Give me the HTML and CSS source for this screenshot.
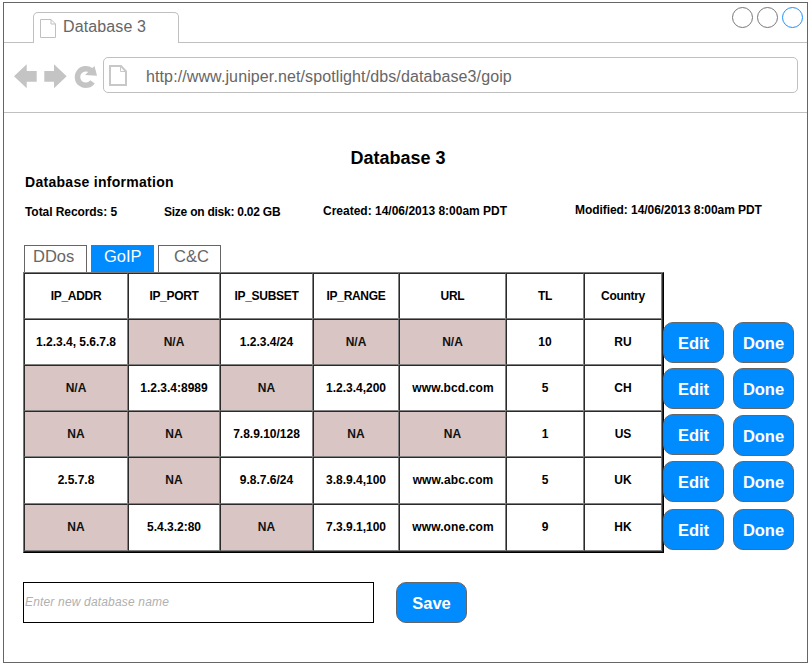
FILE: index.html
```html
<!DOCTYPE html>
<html lang="en">
<head>
<meta charset="utf-8">
<title>Database 3</title>
<link rel="stylesheet" href="styles.css">
</head>
<body>
<div class="window">
  <header class="titlebar">
    <div class="browser-tab">
      <svg class="tab-icon" width="16" height="19" viewBox="0 0 16 19"><path d="M.5.5h10.500l4.500 4.500v13.500H.5zM11 .5v4.500h4.500" /></svg>
      <span>Database 3</span>
    </div>
    <div class="titlebar-rest">
      <i class="dot"></i><i class="dot"></i><i class="dot active"></i>
    </div>
  </header>
  <nav class="toolbar">
    <svg class="nav-icons" width="84" height="26" viewBox="0 0 84 26">
      <path d="M0 12.300L12.700.3V7h10v10.700h-10v6.600z" />
      <path d="M52.700 12.300L40 .3V7H30.300v10.700H40v6.600z" />
      <path class="reload" d="M78.500 17.800A8.300 8.300 0 1 1 77 6.500" />
      <path d="M80.500 2l2.500 9.700-12-.7z" />
    </svg>
    <div class="address">
      <svg class="page-icon" width="18" height="21" viewBox="0 0 18 21"><path d="M1 1h11l5 5.500V20H1z" /><path class="fold" d="M11.500 1.500v5H17" /></svg>
      <span>http://www.juniper.net/spotlight/dbs/database3/goip</span>
    </div>
  </nav>
  <main>
    <h1>Database 3</h1>
    <h2>Database information</h2>
    <div class="info">
      <span class="total">Total Records: 5</span>
      <span class="size">Size on disk: 0.02 GB</span>
      <span class="created">Created: 14/06/2013 8:00am PDT</span>
      <span class="modified">Modified: 14/06/2013 8:00am PDT</span>
    </div>
    <div class="tabs">
      <div class="tab">DDos</div>
      <div class="tab selected">GoIP</div>
      <div class="tab last">C&amp;C</div>
    </div>
    <div class="records">
      <div class="grid">
        <div class="head">IP_ADDR</div><div class="head">IP_PORT</div><div class="head">IP_SUBSET</div><div class="head">IP_RANGE</div><div class="head">URL</div><div class="head">TL</div><div class="head">Country</div>
        <div>1.2.3.4, 5.6.7.8</div><div class="na">N/A</div><div>1.2.3.4/24</div><div class="na">N/A</div><div class="na">N/A</div><div>10</div><div>RU</div>
        <div class="na">N/A</div><div>1.2.3.4:8989</div><div class="na">NA</div><div>1.2.3.4,200</div><div class="url">www.bcd.com</div><div>5</div><div>CH</div>
        <div class="na">NA</div><div class="na">NA</div><div>7.8.9.10/128</div><div class="na">NA</div><div class="na">NA</div><div>1</div><div>US</div>
        <div>2.5.7.8</div><div class="na">NA</div><div>9.8.7.6/24</div><div>3.8.9.4,100</div><div class="url">www.abc.com</div><div>5</div><div>UK</div>
        <div class="na">NA</div><div>5.4.3.2:80</div><div class="na">NA</div><div>7.3.9.1,100</div><div class="url">www.one.com</div><div>9</div><div>HK</div>
      </div>
      <div class="actions edits">
        <button>Edit</button><button>Edit</button><button>Edit</button><button>Edit</button><button>Edit</button>
      </div>
      <div class="actions dones">
        <button>Done</button><button>Done</button><button>Done</button><button>Done</button><button>Done</button>
      </div>
    </div>
    <form class="save-row">
      <input type="text" placeholder="Enter new database name">
      <button type="button" class="save">Save</button>
    </form>
  </main>
</div>
</body>
</html>
```
FILE: styles.css
```css
* { box-sizing: border-box; }
body {
  margin: 0;
  padding: 2px 1px 0 3px;
  background: #fff;
  font-family: "Liberation Sans", Arial, sans-serif;
  overflow: hidden;
}
.window { height: 661px; border: 1px solid #666; }

.titlebar { display: flex; height: 40px; }
.titlebar::before { content: ""; width: 29px; border-bottom: 1px solid #c0c0c0; }
.browser-tab {
  display: flex;
  width: 146px;
  height: 31px;
  margin-top: 9px;
  padding: 6px 0 0 6px;
  border: 1px solid #c0c0c0;
  border-bottom: 0;
  border-radius: 5px 5px 0 0;
  color: #666;
  font-size: 16px;
  line-height: 18px;
}
.browser-tab span { margin: -1px 0 0 7px; letter-spacing: 0.13px; }
.tab-icon { fill: none; stroke: #c0c0c0; }
.titlebar-rest {
  flex: 1;
  display: flex;
  justify-content: flex-end;
  gap: 4px;
  padding: 4px 4px 0 0;
  border-bottom: 1px solid #c0c0c0;
}
.dot { width: 21px; height: 21px; border: 1px solid #777; border-radius: 50%; }
.dot.active { border-color: #1e90ff; }

.toolbar {
  display: flex;
  height: 70px;
  padding: 14px 9px 0 10px;
  border-bottom: 1px solid #c0c0c0;
}
.nav-icons { margin-top: 7px; fill: #c4c4c4; }
.nav-icons .reload { fill: none; stroke: #c4c4c4; stroke-width: 5.5; }
.address {
  display: flex;
  flex: 1;
  align-items: center;
  height: 36px;
  margin-left: 5px;
  padding: 0 5px;
  border: 1px solid #c0c0c0;
  border-radius: 5px;
  color: #666;
  font-size: 16px;
}
.page-icon { fill: none; stroke: #c8c8c8; stroke-width: 2; }
.page-icon .fold { stroke-width: 1; }
.address span { margin-left: 19px; line-height: 18px; padding-top: 3px; letter-spacing: 0.11px; }

main { padding: 34px 0 0 19px; }
h1, h2 { margin: 0; color: #000; }
h1 { width: 750px; font-size: 18px; line-height: 22px; text-align: center; }
h2 { margin: 5px 0 0 2px; font-size: 14px; line-height: 16px; letter-spacing: 0.29px; }
.info {
  display: grid;
  grid-template-columns: 139px 159px 252px auto;
  height: 55px;
  padding: 14px 0 0 2px;
  font-size: 12px;
  font-weight: bold;
  line-height: 14px;
  white-space: nowrap;
}
.info .total { letter-spacing: -0.07px; padding-top: 1px; }
.info .size { letter-spacing: -0.24px; padding-top: 1px; }
.info .modified { margin-top: -1px; letter-spacing: -0.06px; }

.tabs { display: flex; gap: 4px; height: 27px; padding-left: 1px; }
.tab {
  width: 63px;
  border: 1px solid #666;
  border-bottom: 0;
  color: #666;
  font-size: 16.5px;
  line-height: 20px;
  padding-left: 8px;
}
.tab.selected { background: #008cff; border-color: #008cff; color: #fff; padding-left: 12px; }
.tab.last { padding-left: 15px; }

.records { display: flex; height: 281px; }
.grid {
  display: grid;
  grid-template-columns: 104px 92px 93px 86px 107px 78px 78px;
  grid-template-rows: repeat(4, 46px) 47px 47px;
  width: 641px;
  height: 281px;
  border: 1px solid #777;
  border-right-color: #000;
  border-bottom-color: #000;
  background: #2a2a2a;
}
.grid div {
  display: flex;
  align-items: center;
  justify-content: center;
  padding-bottom: 1px;
  border: 1px solid;
  border-color: #2a2a2a #808080 #808080 #2a2a2a;
  background: #fff;
  color: #000;
  font-size: 12px;
  font-weight: bold;
  white-space: nowrap;
}
.grid .na { background: #d8c5c4; color: #111; }
.grid .head { letter-spacing: -0.3px; }
.grid .url { letter-spacing: 0.1px; padding-left: 1px; }
.grid div:nth-child(n+29) { padding-bottom: 2px; }

button {
  display: block;
  padding: 0;
  border: 1px solid #666;
  border-radius: 10px;
  background: #008cff;
  color: #fff;
  font: bold 16.5px/20px "Liberation Sans", Arial, sans-serif;
}
.actions { position: relative; padding-top: 50px; }
.actions button { width: 61px; height: 41px; margin-bottom: 5px; }
.edits { margin-left: -1px; }
.dones { margin-left: 9px; }
.edits button:nth-child(3) { margin-bottom: 6px; }
.dones button:nth-child(2) { margin-bottom: 6px; }
.actions button:nth-child(4) { margin-bottom: 7px; }

.save-row { display: flex; margin-top: 29px; }
.save-row input {
  width: 351px;
  height: 41px;
  padding: 0 1px 2px;
  border: 1px solid #000;
  border-radius: 0;
  font: italic 12px "Liberation Sans", Arial, sans-serif;
  letter-spacing: 0.17px;
}
.save-row input::placeholder { color: #b0b0b0; }
.save { width: 71px; height: 41px; margin-left: 22px; }
```
